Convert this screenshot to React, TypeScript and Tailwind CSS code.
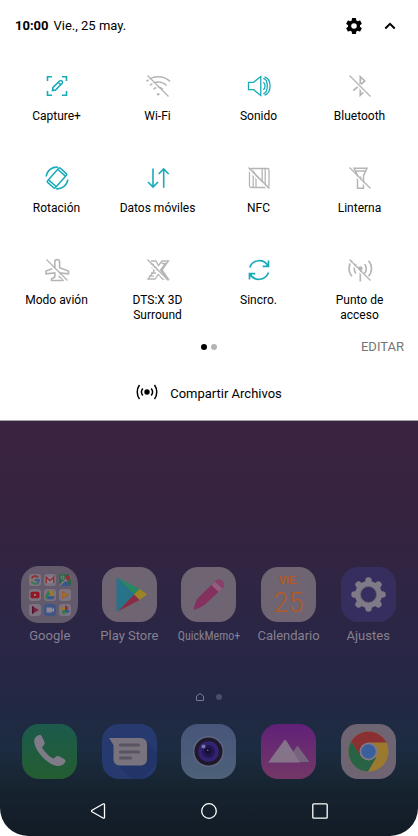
import type { ReactNode } from "react";

function Slash() {
  return (
    <>
      <path d="M1 3.2 20.8 23" stroke="#fff" strokeWidth="1.4" />
      <path d="M1.5 1.5 22.5 22.5" />
    </>
  );
}

function ToggleIcon({ children }: { children: ReactNode }) {
  return (
    <svg
      viewBox="0 0 24 24"
      className="size-6 overflow-visible"
      fill="none"
      stroke="currentColor"
      strokeWidth="1.3"
      aria-hidden="true"
    >
      {children}
    </svg>
  );
}

const toggles: { label: string; on: boolean; icon: ReactNode }[] = [
  {
    label: "Capture+",
    on: true,
    icon: (
      <>
        <path d="M2.5 7V2.7H7M17 2.7h4.5V7M21.5 17v4.3H17M7 21.3H2.5V17" strokeWidth="1.6" />
        <path d="m7.5 16.5.5-3 6.8-6.7c1.5-1 3.4.8 2.4 2.4L10.5 16l-3 .5zM13.3 8.3l2.4 2.4" strokeWidth="1.6" />
      </>
    ),
  },
  {
    label: "Wi-Fi",
    on: false,
    icon: (
      <>
        <path d="M.5 7.3C7 1.3 17.5 1.3 24 7.3M4 11.5c4.8-4.7 11.8-4.7 16.5 0M7.5 15.3c2.5-2.8 6.7-2.8 9.3 0" strokeWidth="1.6" />
        <circle cx="12.2" cy="20.3" r="1.3" fill="currentColor" stroke="none" />
        <Slash />
      </>
    ),
  },
  {
    label: "Sonido",
    on: true,
    icon: (
      <path d="M1.5 8.3h5L13.8 2.5v19L6.5 15.7h-5zM16.3 8.3c2.3 1.5 2.3 5.9 0 7.4M16.3 4.3c5.3 1 5.3 14.4 0 15.4M17.5 2.8c7.4 2.2 7.4 16.2 0 18.4" />
    ),
  },
  {
    label: "Bluetooth",
    on: false,
    icon: (
      <>
        <path d="M12.3 10V2.7l4.4 4.2-3.7 3.4M11 11.8l-5.7 4.7M12.3 14v7.3l3.4-3.3" strokeWidth="1.7" />
        <Slash />
      </>
    ),
  },
  {
    label: "Rotación",
    on: true,
    icon: (
      <>
        <g transform="rotate(42 12 12)">
          <rect x="6.8" y="2.5" width="10.4" height="19" rx="1.2" strokeWidth="1.5" />
          <path d="M7 5h10M7 19h10" strokeWidth="1.5" />
        </g>
        <path d="M1.2 10.5C2 4.5 7 .8 12.8 1.2M22.8 13.5c-.8 6-5.8 9.7-11.6 9.3" strokeWidth="1.6" />
      </>
    ),
  },
  {
    label: "Datos móviles",
    on: true,
    icon: <path d="M7 2.5V21M2 16l5 5 5-5M17.7 21.800V3M12.700 8l5-5 5 5" strokeWidth="1.6" />,
  },
  {
    label: "NFC",
    on: false,
    icon: (
      <>
        <rect x="2.5" y="2.5" width="19.5" height="19" rx="1.8" />
        <path d="M6.2 21.5v-16l9 12v-15M9 21.5V10M18.2 2.5v19" />
        <Slash />
      </>
    ),
  },
  {
    label: "Linterna",
    on: false,
    icon: (
      <>
        <path d="M6 2.2h13l-3.5 7.3v12.7h-6V9.500zM7.500 5h10M12.500 10.500V15" strokeWidth="1.5" />
        <Slash />
      </>
    ),
  },
  {
    label: "Modo avión",
    on: false,
    icon: (
      <>
        <path d="M12.2 1.5c-1.600 0-2.400.8-2.400 2.300v6L1 13v2.800l8.800-.8v4L6.500 21v1.500H18V21l-3.400-2v-4l8.900.8V13l-8.900-3.200v-6c0-1.500-.8-2.300-2.400-2.300z" strokeWidth="1.6" />
        <Slash />
      </>
    ),
  },
  {
    label: "DTS:X 3D\nSurround",
    on: false,
    icon: (
      <>
        <path d="M5 3h5l2.500 4.500L16 3h6.500L16 12l6.500 9h-6l-4-5L9 21H2l6-8M15.500 5.500h4l-5 6.500 5 7M4 6.500h4M5.500 9.500h5M7 12h5M5 15h5M3 18.200h5" strokeWidth="1.3" />
        <Slash />
      </>
    ),
  },
  {
    label: "Sincro.",
    on: true,
    icon: (
      <path d="M2.800 9.500C5.800 1 17 .5 21 8M21.500 2.500v5.800h-5.800M21.500 14.500C18 23 7 23.500 3 16M2.500 21.500v-5.800h5.800" strokeWidth="1.7" />
    ),
  },
  {
    label: "Punto de\nacceso",
    on: false,
    icon: (
      <>
        <circle cx="12.3" cy="10.5" r="2.3" fill="currentColor" stroke="none" />
        <path d="M12.3 11v12.500M8 6c-2.300 2.200-2.300 7 0 9.500M16.500 6c2.300 2.200 2.300 7 0 9.500M4 2.800c-4 4-4 11.500 0 15.500M20.500 2.800c4 4 4 11.500 0 15.500" strokeWidth="1.6" />
        <Slash />
      </>
    ),
  },
];

function TileSvg({ children }: { children: ReactNode }) {
  return (
    <svg viewBox="0 0 55 55" className="size-full" fill="none" aria-hidden="true">
      {children}
    </svg>
  );
}

function FolderMark({ children }: { children: ReactNode }) {
  return (
    <svg viewBox="0 0 12 12" className="size-3" fill="none" aria-hidden="true">
      {children}
    </svg>
  );
}

// Small app marks shown inside the Google folder
const folderApps: { name: string; tile: string; mark: ReactNode }[] = [
  {
    name: "google",
    tile: "bg-[#7d727f]",
    mark: (
      <g strokeWidth="1.7">
        <path d="M9 3.300A4 4 0 0 0 2.600 4.300" stroke="#8c2f33" />
        <path d="M2.600 4.300a4 4 0 0 0 0 3.400" stroke="#9b782c" />
        <path d="M2.600 7.700a4 4 0 0 0 5.900 1.400" stroke="#2f7a4b" />
        <path d="M8.500 9.100A4 4 0 0 0 9.800 6.200H6" stroke="#37568c" />
      </g>
    ),
  },
  {
    name: "gmail",
    tile: "bg-[#7d727f]",
    mark: (
      <>
        <rect x="2" y="2.8" width="8" height="6.4" fill="#8a7f8b" />
        <path d="M2.300 9.300V3.200L6 6.600l3.700-3.400v6.100" stroke="#8c2f33" strokeWidth="1.3" />
      </>
    ),
  },
  {
    name: "maps",
    tile: "bg-[#2b6a48]",
    mark: (
      <>
        <path d="M0 11 11 0l1 1v3L4 12H0z" fill="#7d727f" />
        <path d="m1.500 12 5-5 5 5z" fill="#37568c" />
        <circle cx="3.5" cy="3.5" r="1.5" stroke="#8f8490" />
        <path d="M9 1a2.300 2.300 0 0 0-2.300 2.300C6.700 5 9 7.500 9 7.500s2.300-2.500 2.300-4.200A2.300 2.300 0 0 0 9 1z" fill="#8c2f33" />
      </>
    ),
  },
  {
    name: "youtube",
    tile: "bg-[#7d727f]",
    mark: (
      <>
        <rect x="1.5" y="2.8" width="9" height="6.4" rx="1.6" fill="#93151f" />
        <path d="m5 4.500 2.800 1.500L5 7.500z" fill="#8f8490" />
      </>
    ),
  },
  {
    name: "drive",
    tile: "bg-[#7d727f]",
    mark: (
      <>
        <path d="M4.300 1.500 1 7.300l1.700 2.900L6 4.400z" fill="#2f7a4b" />
        <path d="M4.300 1.500h3.400L11 7.300H7.600z" fill="#9b782c" />
        <path d="m4.400 7.300-1.700 2.900h6.600L11 7.300z" fill="#37568c" />
      </>
    ),
  },
  {
    name: "music",
    tile: "bg-[#7d727f]",
    mark: (
      <>
        <path d="m3 2 7 4-7 4z" fill="#a1602a" />
        <circle cx="5.5" cy="6" r="1.6" fill="#9b782c" />
      </>
    ),
  },
  {
    name: "movies",
    tile: "bg-[#7d727f]",
    mark: (
      <>
        <path d="m3 2 7 4-7 4z" fill="#7c2342" />
        <path d="m3 2 1.800 1v6L3 10z" fill="#54152e" />
      </>
    ),
  },
  {
    name: "duo",
    tile: "bg-[#3f5588]",
    mark: <path d="M2.500 3.500H8v1.800l2-1.600v4.600L8 6.700v1.800H2.500z" fill="#8f8894" />,
  },
  {
    name: "photos",
    tile: "bg-[#7d727f]",
    mark: (
      <>
        <path d="M6 6V1.500c2.700 0 3.600 2.200 2.300 4.500z" fill="#8a3134" />
        <path d="M6 6h4.500c0 2.700-2.200 3.600-4.500 2.300z" fill="#37568c" />
        <path d="M6 6v4.500C3.300 10.500 2.400 8.300 3.700 6z" fill="#2f7a4b" />
        <path d="M6 6H1.500c0-2.700 2.200-3.600 4.500-2.300z" fill="#9b782c" />
      </>
    ),
  },
];

const apps: { label: string; tile: string; text: string; icon: ReactNode }[] = [
  {
    label: "Google",
    tile: "size-[57px] bg-[#635b6b] rounded-[18px]",
    text: "text-[13px]/4",
    icon: (
      <span className="grid size-full grid-cols-[repeat(3,12px)] place-content-center gap-[3px]">
        {folderApps.map((app) => (
          <span key={app.name} className={`size-3 overflow-hidden rounded-[3px] ${app.tile}`}>
            <FolderMark>{app.mark}</FolderMark>
          </span>
        ))}
      </span>
    ),
  },
  {
    label: "Play Store",
    tile: "size-[55px] bg-[#6e6472] rounded-[17px]",
    text: "text-[13px]/4",
    icon: (
      <TileSvg>
        <path d="M14.500 11.500v32c0 1 1 1.300 1.700.6L32 27.500 16.200 11c-.7-.6-1.700-.4-1.700.5z" fill="#26738a" />
        <path d="M16.200 11 37.500 22 32 27.500z" fill="#268763" />
        <path d="m37.500 22 6.300 4.200c1 .6 1 1.800 0 2.400L37.500 33 32 27.500z" fill="#9b8424" />
        <path d="M37.500 33 16.200 44.200 32 27.500z" fill="#8b2c46" />
      </TileSvg>
    ),
  },
  {
    label: "QuickMemo+",
    tile: "size-[55px] bg-[#6e6472] rounded-[17px]",
    text: "font-['Roboto_Condensed',Roboto,sans-serif] text-[12px]/4",
    icon: (
      <TileSvg>
        <path d="M13 42.500c-.7-.7 1.800-8.500 4-11.500L34.500 14c4-4.500 11.500 2 7.300 6.800L24 37.500c-3 2.500-10.200 5.700-11 5z" fill="#84315f" />
        <path d="m30.500 18 3.500-3.500 7.500 7-3.800 3.500z" fill="#906080" />
        <path d="M34 14.500c4.500-5 12 2 7.500 7z" fill="#8a4069" />
      </TileSvg>
    ),
  },
  {
    label: "Calendario",
    tile: "size-[55px] bg-[#6e6472] rounded-[17px]",
    text: "text-[13px]/4",
    icon: (
      <span className="flex size-full flex-col items-center pt-[7px] text-[#b35a26]">
        <span className="text-[11px]/[13px] font-bold">VIE.</span>
        <span className="text-[27px]/8 font-light">25</span>
      </span>
    ),
  },
  {
    label: "Ajustes",
    tile: "size-[55px] bg-[#352e5e] rounded-[17px]",
    text: "text-[13px]/4",
    icon: (
      <TileSvg>
        <g stroke="#807987" strokeWidth="6.5" strokeLinecap="round">
          <path d="M27.500 13.500v28M13.500 27.500h28M17.600 17.600l19.800 19.800M37.400 17.600 17.600 37.400" />
        </g>
        <circle cx="27.5" cy="27.5" r="13.5" fill="#807987" />
        <circle cx="27.5" cy="27.5" r="8" fill="#352e5e" stroke="#69626f" />
      </TileSvg>
    ),
  },
];

const dock: { label: string; tile: string; icon: ReactNode }[] = [
  {
    label: "Teléfono",
    tile: "bg-linear-to-b from-[#1c5a4c] to-[#245d30]",
    icon: (
      <TileSvg>
        <path d="M16 11.500c1.500-.8 3.200-.6 3.800.8l2.700 6c.5 1.300-.2 2.400-1.500 3.700-1.200 1.200-.8 2 .3 3.600 2.200 3.200 5 6 8.300 8.200 1.400.9 2.300 1 3.300-.3 1.200-1.500 2.600-2 4-1.300l5.200 2.800c1.700.9 1.600 2.600.3 4.300C33.500 50 10.500 27 12.300 16c.3-2 1.800-3.500 3.700-4.500z" fill="#807b89" />
      </TileSvg>
    ),
  },
  {
    label: "Mensajes",
    tile: "bg-[#263a70]",
    icon: (
      <TileSvg>
        <path d="m43 16 12 12v12L40 55H29L15 40z" fill="#233568" />
        <path d="M7 14h32a6 6 0 0 1 6 6v15.500a6 6 0 0 1-6 6H17.500a6 6 0 0 1-6-6V21z" fill="#78737d" />
        <path d="M18.500 21h18M18.500 28h18M18.500 34h10" stroke="#585463" strokeWidth="3.2" strokeLinecap="round" />
      </TileSvg>
    ),
  },
  {
    label: "Cámara",
    tile: "bg-linear-to-b from-[#47557a] to-[#4d6179]",
    icon: (
      <TileSvg>
        <circle cx="27.5" cy="27.5" r="15.5" fill="#5e6683" />
        <circle cx="27.5" cy="27.5" r="14" fill="#1e1929" />
        <circle cx="27.5" cy="27.5" r="10.5" fill="#312371" />
        <circle cx="27.5" cy="27.5" r="6.5" fill="#231753" />
        <circle cx="27" cy="27" r="3" fill="#160f31" />
        <circle cx="22.5" cy="22.5" r="2" fill="#7a77a4" />
        <circle cx="26.8" cy="26.2" r=".8" fill="#79769a" />
      </TileSvg>
    ),
  },
  {
    label: "Galería",
    tile: "bg-linear-to-b from-[#612078] to-[#733766]",
    icon: (
      <TileSvg>
        <path d="m29 32 7.500-10.500 12 16.500H32z" fill="#77637e" />
        <path d="M7.500 38 22.700 17c.8-1.200 2-1.200 2.800 0L39 38.500H8.500c-1 0-1.500 0-1-.5z" fill="#85738a" />
      </TileSvg>
    ),
  },
  {
    label: "Chrome",
    tile: "bg-[#6e6472]",
    icon: (
      <TileSvg>
        <circle cx="27.5" cy="27.5" r="20" fill="#9b792e" />
        <path d="M10.200 17.500a20 20 0 0 1 34.600 0l.4 1H27.500L19 32z" fill="#8b3032" />
        <path d="M10.200 17.500 19.700 32l7.800 4.500 8-3.500L27 47.500a20 20 0 0 1-16.800-30z" fill="#276344" />
        <circle cx="27.5" cy="27.5" r="9" fill="#7f7887" />
        <circle cx="27.5" cy="27.5" r="7.2" fill="#39609d" />
      </TileSvg>
    ),
  },
];

function QuickPanel() {
  return (
    <section className="border-b border-[#a9a1b0] bg-white text-black">
      <header className="flex h-[52px] items-center justify-between pr-5 pl-[15px]">
        <p className="flex gap-[5px] text-[13px]/4">
          <time className="font-bold">10:00</time>
          <span>Vie., 25 may.</span>
        </p>
        <div className="flex items-center gap-5">
          <button type="button" aria-label="Ajustes rápidos">
            <svg viewBox="2 2 20 20" className="size-4" fill="currentColor" aria-hidden="true">
              <path d="M19.430 12.980c.04-.32.07-.64.07-.98s-.03-.66-.07-.98l2.110-1.650c.19-.15.24-.42.12-.64l-2-3.460c-.12-.22-.39-.3-.61-.22l-2.490 1c-.52-.4-1.080-.73-1.690-.98l-.38-2.650A.49.49 0 0 0 14 2h-4c-.25 0-.46.18-.49.42l-.38 2.650c-.61.25-1.170.59-1.690.98l-2.490-1c-.23-.09-.49 0-.61.22l-2 3.460c-.13.22-.07.49.12.64l2.110 1.650c-.04.32-.07.65-.07.98s.03.66.07.98l-2.110 1.650c-.19.15-.24.42-.12.64l2 3.460c.12.22.39.3.61.22l2.490-1c.52.4 1.080.73 1.690.98l.38 2.650c.03.24.24.42.49.42h4c.25 0 .46-.18.49-.42l.38-2.650c.61-.25 1.170-.59 1.690-.98l2.490 1c.23.09.49 0 .61-.22l2-3.460c.12-.22.07-.49-.12-.64zM12 15.500a3.500 3.500 0 1 1 0-7 3.500 3.500 0 0 1 0 7z" />
            </svg>
          </button>
          <button type="button" aria-label="Contraer" className="flex size-4 items-center justify-center">
            <svg viewBox="0 0 12 12" className="size-3" fill="none" stroke="currentColor" strokeWidth="2" aria-hidden="true">
              <path d="m1.300 8.500 4.700-4.700 4.700 4.700" />
            </svg>
          </button>
        </div>
      </header>

      <div className="grid grid-cols-4 items-start gap-y-[42px] pt-[22px] pr-2 pl-1.5">
        {toggles.map((toggle) => (
          <button
            key={toggle.label}
            type="button"
            aria-pressed={toggle.on}
            className="flex flex-col items-center gap-[11px]"
          >
            <span className={toggle.on ? "text-[#17abb9]" : "text-[#b5b5b5]"}>
              <ToggleIcon>{toggle.icon}</ToggleIcon>
            </span>
            <span className="text-[12px]/[15px] whitespace-pre-line">{toggle.label}</span>
          </button>
        ))}
      </div>

      <div className="mt-4 grid grid-cols-3 items-center px-3.5">
        <div className="col-start-2 flex justify-center gap-1">
          <span className="size-1.5 rounded-full bg-black" />
          <span className="size-1.5 rounded-full bg-[#b5b5b5]" />
        </div>
        <button type="button" className="justify-self-end text-[13px]/4 text-[#757575]">
          EDITAR
        </button>
      </div>

      <button type="button" className="mx-auto mt-[29px] mb-4 flex items-center gap-3 text-[13px]/4">
        <svg viewBox="0 0 22 16" className="mb-1 h-4 w-[22px]" fill="none" stroke="currentColor" strokeWidth="1.5" aria-hidden="true">
          <circle cx="11" cy="8" r="2.7" fill="currentColor" stroke="none" />
          <path d="M6.800 4.500c-1.600 2-1.600 5 0 7M15.200 4.500c1.600 2 1.600 5 0 7M3.500 1c-3 4-3 10 0 14M18.500 1c3 4 3 10 0 14" />
        </svg>
        Compartir Archivos
      </button>
    </section>
  );
}

function HomeScreen() {
  return (
    <section className="flex flex-1 flex-col justify-end rounded-b-[28px] bg-[linear-gradient(#3a2341_0%,#36233f_20%,#302543_38%,#292646_55%,#222844_68%,#1c2c41_79%,#16232f_89%,#121b26_100%)] pt-10 pb-[17px]">
      <div className="grid grid-cols-5 px-2.5">
        {apps.map((app) => (
          <button key={app.label} type="button" className="flex flex-col items-center gap-[5px]">
            <span className="flex h-[57px] items-center">
              <span className={`block overflow-hidden ${app.tile}`}>{app.icon}</span>
            </span>
            <span className={`whitespace-nowrap text-[#86808f] ${app.text}`}>{app.label}</span>
          </button>
        ))}
      </div>

      <div className="mt-12 flex items-center justify-center gap-[9px]">
        <svg viewBox="0 0 10 10" className="size-2.5" fill="none" stroke="#77778a" aria-hidden="true">
          <path d="M1.500 8.500V4L5 1.500 8.500 4v4.500z" />
        </svg>
        <span className="flex size-2.5 items-center justify-center">
          <span className="size-1.5 rounded-full bg-[#4c4c66]" />
        </span>
      </div>

      <div className="mt-[22px] grid grid-cols-5 justify-items-center px-2.5">
        {dock.map((app) => (
          <button
            key={app.label}
            type="button"
            aria-label={app.label}
            className={`size-[55px] overflow-hidden rounded-[17px] ${app.tile}`}
          >
            {app.icon}
          </button>
        ))}
      </div>

      <nav className="mx-auto mt-6 flex w-[57%] items-center justify-between text-white" aria-label="Navegación">
        <button type="button" aria-label="Atrás">
          <svg viewBox="0 0 16 16" className="size-4" fill="none" stroke="currentColor" strokeWidth="1.3" aria-hidden="true">
            <path d="M14.500 1.800v12.400c0 .9-.8 1.200-1.500.8L2 8.700c-.6-.4-.6-1 0-1.400L13 1c.7-.4 1.500-.1 1.500.8z" />
          </svg>
        </button>
        <button type="button" aria-label="Inicio">
          <svg viewBox="0 0 16 16" className="size-4" fill="none" stroke="currentColor" strokeWidth="1.3" aria-hidden="true">
            <circle cx="8" cy="8" r="7.3" />
          </svg>
        </button>
        <button type="button" aria-label="Recientes">
          <svg viewBox="0 0 16 16" className="size-4" fill="none" stroke="currentColor" strokeWidth="1.3" aria-hidden="true">
            <rect x=".8" y=".8" width="14.4" height="14.4" rx="1" />
          </svg>
        </button>
      </nav>
    </section>
  );
}

export default function App() {
  return (
    <main className="flex min-h-screen flex-col bg-white font-[Roboto,sans-serif]">
      <QuickPanel />
      <HomeScreen />
    </main>
  );
}
